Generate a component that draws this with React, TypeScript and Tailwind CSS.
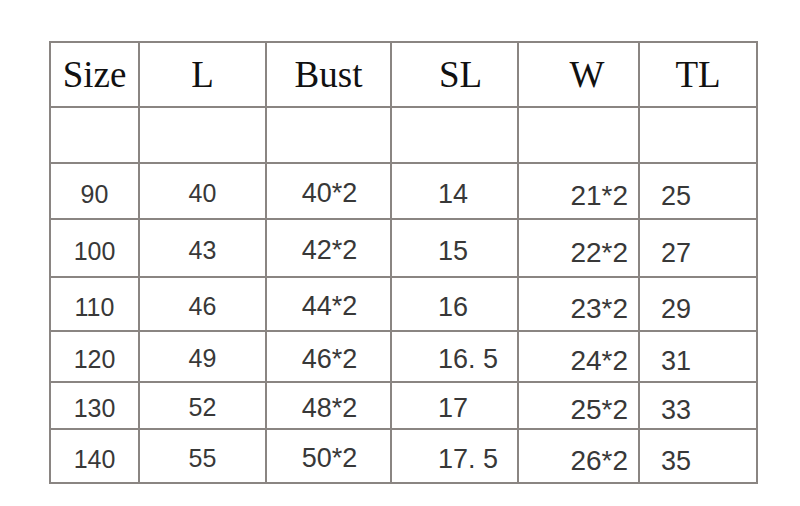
import React from 'react';

const headers = ['Size', 'L', 'Bust', 'SL', 'W', 'TL'];

const rows: string[][] = [
  ['90', '40', '40*2', '14', '21*2', '25'],
  ['100', '43', '42*2', '15', '22*2', '27'],
  ['110', '46', '44*2', '16', '23*2', '29'],
  ['120', '49', '46*2', '16. 5', '24*2', '31'],
  ['130', '52', '48*2', '17', '25*2', '33'],
  ['140', '55', '50*2', '17. 5', '26*2', '35'],
];

// per-column alignment of the data cells, as in the scanned chart
const dataCell = [
  'justify-center text-[25px] pt-[6px]',
  'justify-center text-[25px] pt-[4px]',
  'justify-center text-[27px] pl-[2px] pt-[5px]',
  'justify-start pl-[46px] text-[27px] pt-[6px]',
  'justify-end pr-[10px] text-[28px] pt-[9px]',
  'justify-start pl-[21px] text-[27px] pt-[10px]',
];

const headCell = [
  'justify-center',
  'justify-center',
  'justify-center',
  'justify-center pl-[12px]',
  'justify-center pl-[17px]',
  'justify-center',
];

export default function App() {
  return (
    <div className="w-[800px] h-[506px] bg-white overflow-hidden pt-[41px] pl-[49px]">
      <div className="w-[709px] grid grid-cols-[87px_125px_123px_125px_119px_116px] grid-rows-[63px_54px_54px_56px_52px_49px_45px_52px] gap-[2px] p-[2px] bg-[#8a8582]">
        {headers.map((h, i) => (
          <div
            key={h}
            className={`bg-white flex items-center ${headCell[i]} text-[37px] text-[#111] leading-none`}
            style={{ fontFamily: '"Liberation Serif", "Times New Roman", serif' }}
          >
            {h}
          </div>
        ))}
        {headers.map((h) => (
          <div key={`blank-${h}`} className="bg-white" />
        ))}
        {rows.map((r, ri) =>
          r.map((v, ci) => (
            <div
              key={`${ri}-${ci}`}
              className={`bg-white flex items-center ${dataCell[ci]} text-[#383838] leading-none`}
              style={{ fontFamily: '"Liberation Sans", Arial, sans-serif' }}
            >
              {v}
            </div>
          ))
        )}
      </div>
    </div>
  );
}
